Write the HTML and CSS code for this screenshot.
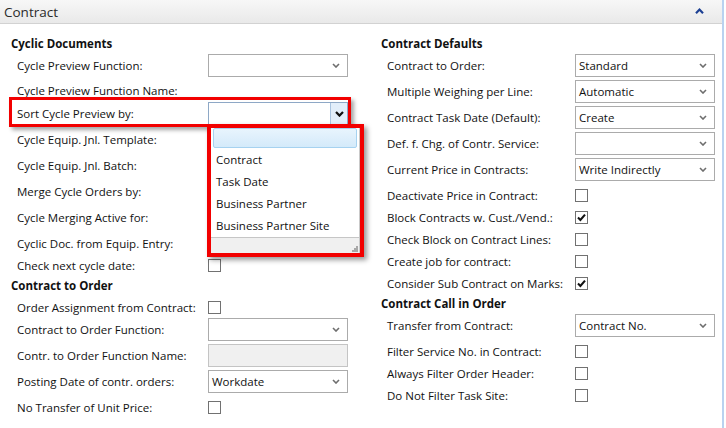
FILE: index.html
```html
<!DOCTYPE html>
<html>
<head>
<meta charset="utf-8">
<title>Contract</title>
<link rel="stylesheet" href="styles.css">
</head>
<body>
<div class="panel">
  <div class="panel-head">
    <span class="panel-title">Contract</span>
    <svg class="collapse" width="9" height="6" viewBox="0 0 9 6"><path d="M1 5.2 L4.5 1.6 L8 5.2" fill="none" stroke="#1b3f93" stroke-width="2.2"/></svg>
  </div>
  <div class="panel-body">
    <div class="col col-left">
      <div class="group-title">Cyclic Documents</div>
      <div class="row sel"><span class="lbl">Cycle Preview Function:</span><div class="select"><span class="val"></span><svg class="chev" width="8" height="5" viewBox="0 0 8 5"><path d="M1 1 L4 4 L7 1" fill="none" stroke="#6e6e6e" stroke-width="1.6"/></svg></div></div>
      <div class="row txt"><span class="lbl">Cycle Preview Function Name:</span></div>
      <div class="row sel sort-row"><span class="lbl">Sort Cycle Preview by:</span>
        <div class="select active"><span class="val"></span><span class="drop-btn"><svg width="9" height="6" viewBox="0 0 9 6"><path d="M1 1 L4.5 4.6 L8 1" fill="none" stroke="#111" stroke-width="2.2"/></svg></span></div>
        <div class="mark-row"></div>
        <div class="popup">
          <ul class="popup-list">
            <li class="opt opt-empty"><span class="opt-hl"></span></li>
            <li class="opt">Contract</li>
            <li class="opt">Task Date</li>
            <li class="opt">Business Partner</li>
            <li class="opt">Business Partner Site</li>
          </ul>
          <div class="popup-foot"><svg class="grip" width="7" height="7" viewBox="0 0 7 7"><g fill="#a8a8a8"><rect x="5" y="1" width="2" height="2"/><rect x="3" y="3" width="2" height="2"/><rect x="5" y="3" width="2" height="2"/><rect x="1" y="5" width="2" height="2"/><rect x="3" y="5" width="2" height="2"/><rect x="5" y="5" width="2" height="2"/></g></svg></div>
        </div>
      </div>
      <div class="row sel"><span class="lbl">Cycle Equip. Jnl. Template:</span><div class="select"></div></div>
      <div class="row sel"><span class="lbl">Cycle Equip. Jnl. Batch:</span><div class="select"></div></div>
      <div class="row sel"><span class="lbl">Merge Cycle Orders by:</span><div class="select"></div></div>
      <div class="row sel"><span class="lbl">Cycle Merging Active for:</span><div class="select"></div></div>
      <div class="row chk"><span class="lbl">Cyclic Doc. from Equip. Entry:</span><span class="check"></span></div>
      <div class="row chk"><span class="lbl">Check next cycle date:</span><span class="check"></span></div>

      <div class="group-title">Contract to Order</div>
      <div class="row chk"><span class="lbl">Order Assignment from Contract:</span><span class="check"></span></div>
      <div class="row sel"><span class="lbl">Contract to Order Function:</span><div class="select"><span class="val"></span><svg class="chev" width="8" height="5" viewBox="0 0 8 5"><path d="M1 1 L4 4 L7 1" fill="none" stroke="#6e6e6e" stroke-width="1.6"/></svg></div></div>
      <div class="row sel"><span class="lbl">Contr. to Order Function Name:</span><div class="textbox disabled"></div></div>
      <div class="row sel"><span class="lbl">Posting Date of contr. orders:</span><div class="select"><span class="val">Workdate</span><svg class="chev" width="8" height="5" viewBox="0 0 8 5"><path d="M1 1 L4 4 L7 1" fill="none" stroke="#6e6e6e" stroke-width="1.6"/></svg></div></div>
      <div class="row chk"><span class="lbl">No Transfer of Unit Price:</span><span class="check"></span></div>
    </div>

    <div class="col col-right">
      <div class="group-title">Contract Defaults</div>
      <div class="row sel"><span class="lbl">Contract to Order:</span><div class="select"><span class="val">Standard</span><svg class="chev" width="8" height="5" viewBox="0 0 8 5"><path d="M1 1 L4 4 L7 1" fill="none" stroke="#6e6e6e" stroke-width="1.6"/></svg></div></div>
      <div class="row sel"><span class="lbl">Multiple Weighing per Line:</span><div class="select"><span class="val">Automatic</span><svg class="chev" width="8" height="5" viewBox="0 0 8 5"><path d="M1 1 L4 4 L7 1" fill="none" stroke="#6e6e6e" stroke-width="1.6"/></svg></div></div>
      <div class="row sel"><span class="lbl">Contract Task Date (Default):</span><div class="select"><span class="val">Create</span><svg class="chev" width="8" height="5" viewBox="0 0 8 5"><path d="M1 1 L4 4 L7 1" fill="none" stroke="#6e6e6e" stroke-width="1.6"/></svg></div></div>
      <div class="row sel"><span class="lbl">Def. f. Chg. of Contr. Service:</span><div class="select"><span class="val"></span><svg class="chev" width="8" height="5" viewBox="0 0 8 5"><path d="M1 1 L4 4 L7 1" fill="none" stroke="#6e6e6e" stroke-width="1.6"/></svg></div></div>
      <div class="row sel"><span class="lbl">Current Price in Contracts:</span><div class="select"><span class="val">Write Indirectly</span><svg class="chev" width="8" height="5" viewBox="0 0 8 5"><path d="M1 1 L4 4 L7 1" fill="none" stroke="#6e6e6e" stroke-width="1.6"/></svg></div></div>
      <div class="row chk first-chk"><span class="lbl">Deactivate Price in Contract:</span><span class="check"></span></div>
      <div class="row chk"><span class="lbl">Block Contracts w. Cust./Vend.:</span><span class="check"><svg width="11" height="11" viewBox="0 0 11 11"><path d="M2 5.6 L4.4 8 L9 2.6" fill="none" stroke="#111" stroke-width="2.1"/></svg></span></div>
      <div class="row chk"><span class="lbl">Check Block on Contract Lines:</span><span class="check"></span></div>
      <div class="row chk"><span class="lbl">Create job for contract:</span><span class="check"></span></div>
      <div class="row chk"><span class="lbl">Consider Sub Contract on Marks:</span><span class="check"><svg width="11" height="11" viewBox="0 0 11 11"><path d="M2 5.6 L4.4 8 L9 2.6" fill="none" stroke="#111" stroke-width="2.1"/></svg></span></div>

      <div class="group-title">Contract Call in Order</div>
      <div class="row sel"><span class="lbl">Transfer from Contract:</span><div class="select"><span class="val">Contract No.</span><svg class="chev" width="8" height="5" viewBox="0 0 8 5"><path d="M1 1 L4 4 L7 1" fill="none" stroke="#6e6e6e" stroke-width="1.6"/></svg></div></div>
      <div class="row chk"><span class="lbl">Filter Service No. in Contract:</span><span class="check"></span></div>
      <div class="row chk"><span class="lbl">Always Filter Order Header:</span><span class="check"></span></div>
      <div class="row chk"><span class="lbl">Do Not Filter Task Site:</span><span class="check"></span></div>
    </div>
  </div>
</div>
</body>
</html>
```
FILE: styles.css
```css
* { box-sizing: border-box; }
html, body { margin: 0; padding: 0; background: #fff; }
body {
  width: 726px;
  height: 428px;
  overflow: hidden;
  font-family: "Open Sans", "Noto Sans", sans-serif;
  font-size: 11.5px;
  color: #111;
}
.panel {
  width: 724px;
  height: 428px;
  border-right: 2px solid #b9d2f0;
}
.panel-head {
  height: 24px;
  display: flex;
  align-items: center;
  justify-content: space-between;
  padding: 0 18px 0 4px;
  background: linear-gradient(#f7f7f7, #e9e9e9);
  border-bottom: 1px solid #d2d2d2;
}
.panel-title {
  font-size: 13.5px;
  color: #2a2a2a;
}
.collapse { display: block; margin-top: -2px; }

.panel-body {
  display: grid;
  grid-template-columns: 337px 334px;
  column-gap: 33px;
  padding: 10px 0 0 11px;
}
.group-title {
  height: 20px;
  line-height: 20px;
  font-weight: 700;
  color: #111;
}
.row {
  display: flex;
  padding-left: 6px;
}
.col-left .lbl { width: 191px; flex: none; }
.col-right .lbl { width: 188px; flex: none; }
.lbl { white-space: nowrap; }

.row.sel { height: 26px; align-items: flex-start; }
.row.sel .lbl { line-height: 23px; }
.row.chk, .row.txt { height: 22px; align-items: center; }
.row.txt .lbl { line-height: 22px; }

.select {
  width: 140px;
  height: 23px;
  border: 1px solid #ababab;
  background: #fff;
  display: flex;
  align-items: center;
  justify-content: space-between;
  padding: 0 7px 0 3px;
}
.select .val { white-space: nowrap; }
.chev { display: block; }
.textbox {
  width: 140px;
  height: 23px;
  border: 1px solid #c4c4c4;
}
.textbox.disabled { background: #f0f0f0; }

.check {
  width: 13px;
  height: 13px;
  border: 1px solid #717171;
  background: #fff;
  display: flex;
  align-items: center;
  justify-content: center;
}
.check svg { display: block; }

/* active select with open list */
.sort-row { position: relative; }
.select.active {
  border-color: #8ea8c6;
  padding: 0 0 0 3px;
}
.drop-btn {
  width: 17px;
  height: 21px;
  background: #e2eefa;
  border-left: 1px solid #a9c4e0;
  display: flex;
  align-items: center;
  justify-content: center;
}
.mark-row {
  position: absolute;
  left: -2px;
  top: -5px;
  width: 342px;
  height: 30px;
  border: 3px solid #f20000;
  box-shadow: 3px 3px 4px rgba(0, 0, 0, 0.35);
  z-index: 2;
}
.popup {
  position: absolute;
  left: 196px;
  top: 22px;
  width: 157px;
  height: 133px;
  border: 4px solid #f20000;
  background: #fff;
  box-shadow: 3px 3px 5px rgba(0, 0, 0, 0.4);
  z-index: 3;
  display: flex;
  flex-direction: column;
}
.popup-list {
  list-style: none;
  margin: 0;
  padding: 0;
  border-right: 1px solid #c9c9c9;
  flex: none;
}
.opt {
  height: 22px;
  line-height: 22px;
  padding-left: 5px;
  white-space: nowrap;
}
.opt-empty {
  height: 21px;
  padding: 0 2px 1px 2px;
}
.opt-hl {
  display: block;
  height: 20px;
  border: 1px solid #a6d2f0;
  border-radius: 2px;
  background: linear-gradient(#e8f4fd, #d4eafa);
}
.popup-foot {
  flex: 1;
  border-top: 1px solid #c6c6c6;
  border-right: 1px solid #c9c9c9;
  background: #f0f0f0;
  display: flex;
  align-items: flex-end;
  justify-content: flex-end;
  padding: 0 1px 1px 0;
}
.grip { display: block; }
```
